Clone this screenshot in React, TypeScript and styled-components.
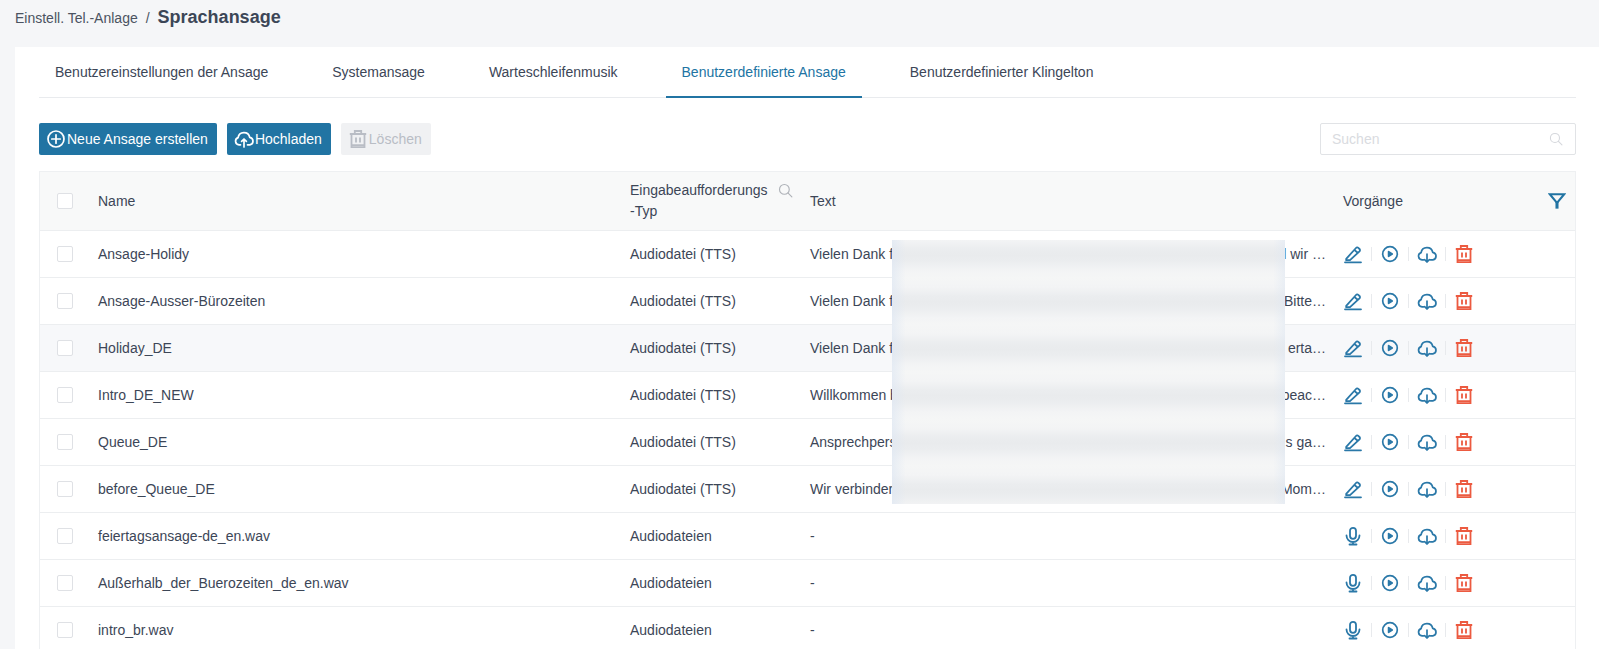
import React from 'react';
import styled, { createGlobalStyle } from 'styled-components';

const Global = createGlobalStyle`
  html, body { margin: 0; padding: 0; background: #f5f6f8; overflow: hidden; height: 649px; }
  body { font-family: "Liberation Sans", Arial, sans-serif; color: #3c4657; font-size: 14px; }
  * { box-sizing: border-box; }
`;

const Page = styled.div`
  width: 1599px;
  height: 649px;
  overflow: hidden;
  padding: 0 0 0 15px;
  display: flex;
  flex-direction: column;
`;
const Crumbs = styled.div`
  flex: 0 0 47px;
  display: flex;
  align-items: flex-start;
  padding-top: 7px;
  line-height: 20px;
`;
const CrumbLink = styled.span`
  color: #4b5361;
  padding-top: 1px;
`;
const CrumbSep = styled.span`
  margin: 1px 8px 0 8px;
  color: #4b5361;
`;
const CrumbNow = styled.span`
  font-size: 18px;
  font-weight: 700;
  color: #3c4657;
`;
const Card = styled.main`
  flex: 1;
  min-height: 0;
  background: #fff;
  padding: 0 23px 0 24px;
  position: relative;
`;
const Tabs = styled.nav`
  height: 51px;
  display: flex;
  border-bottom: 1px solid #e9ebee;
`;
const Tab = styled.div<{ $active?: boolean }>`
  padding: 0 16px;
  margin-right: 32px;
  line-height: 50px;
  height: 51px;
  white-space: nowrap;
  color: ${p => (p.$active ? '#2174a3' : '#3c4657')};
  border-bottom: ${p => (p.$active ? '2px solid #2174a3' : 'none')};
`;
const Toolbar = styled.div`
  display: flex;
  align-items: center;
  gap: 10px;
  margin-top: 25px;
  height: 32px;
`;
const Btn = styled.button<{ $disabled?: boolean }>`
  height: 32px;
  border: 0;
  border-radius: 2px;
  padding: 0 9px 0 7px;
  display: inline-flex;
  align-items: center;
  gap: 1px;
  font: 14px "Liberation Sans", Arial, sans-serif;
  background: ${p => (p.$disabled ? '#f0f1f3' : '#2174a3')};
  color: ${p => (p.$disabled ? '#b9bdc5' : '#fff')};
`;
const Search = styled.div`
  margin-left: auto;
  width: 256px;
  height: 32px;
  border: 1px solid #e1e3e6;
  border-radius: 2px;
  padding: 0 12px 0 11px;
  display: flex;
  align-items: center;
  justify-content: space-between;
  color: #d9dbe0;
`;
const Table = styled.div`
  margin-top: 16px;
  border: 1px solid #eef0f2;
  border-bottom: 0;
`;
const cols = '58px 532px 180px 533px 1fr';
const Head = styled.div`
  display: grid;
  grid-template-columns: ${cols};
  height: 59px;
  align-items: center;
  background: #f8f9f9;
  border-bottom: 1px solid #eceef0;
  line-height: 21px;
`;
const Row = styled.div<{ $hover?: boolean }>`
  display: grid;
  grid-template-columns: ${cols};
  height: 47px;
  align-items: center;
  background: ${p => (p.$hover ? '#f7f8fa' : '#fff')};
  border-bottom: 1px solid #eceef0;
`;
const CheckCell = styled.div`
  padding-left: 17px;
  display: flex;
`;
const Check = styled.span`
  width: 16px;
  height: 16px;
  background: #fff;
  border: 1px solid #dfe1e5;
  border-radius: 2px;
`;
const Cell = styled.div`
  white-space: nowrap;
`;
const TypeHead = styled.div`
  display: flex;
  align-items: flex-start;
  justify-content: space-between;
  padding-right: 17px;
`;
const TypeIcon = styled.span`
  display: flex;
  margin-top: 3px;
`;
const TextCell = styled.div`
  display: flex;
  justify-content: space-between;
  padding-right: 17px;
  white-space: nowrap;
`;
const OpsHead = styled.div`
  display: flex;
  justify-content: space-between;
  padding-right: 9px;
  align-items: center;
`;
const Ops = styled.div`
  display: flex;
  align-items: center;
`;
const Op = styled.span`
  flex: none;
  padding-right: 9px;
  margin-right: 8px;
  display: flex;
  position: relative;
  &:not(:last-child)::after {
    content: '';
    position: absolute;
    right: 0;
    top: 3px;
    height: 14px;
    width: 1px;
    background: #e8eaed;
  }
`;
const Blur = styled.div`
  position: absolute;
  left: 877px;
  top: 193px;
  width: 393px;
  height: 264px;
  background:
    linear-gradient(90deg, rgba(222,231,243,.65), rgba(255,255,255,0) 3.5%, rgba(255,255,255,0) 97%, rgba(222,231,243,.5)),
    repeating-linear-gradient(180deg, #f3f4f5 0, #ebedef 9px, #e9ebed 15px, #ebedef 21px, #f3f4f5 31px, #f5f6f6 38px, #f3f4f5 47px);
`;

const blue = '#2a78a8';
const red = '#ec5a40';
const Ico: React.FC<{ c?: string; s?: number; sw?: number; children: React.ReactNode }> = ({ c = blue, s = 20, sw = 1.7, children }) => (
  <svg width={s} height={s} viewBox="0 0 20 20" fill="none" stroke={c} strokeWidth={sw} strokeLinecap="round" strokeLinejoin="round">{children}</svg>
);
const cloud = 'M6.5 15.8H5a3.7 3.7 0 0 1-.9-7.2 5.9 5.9 0 0 1 11.6-.3 3.8 3.8 0 0 1 .2 7.5h-2.4';
const Pen = () => <Ico sw={1.8}><path d="M3.2 14.8 13 4a1.6 1.6 0 0 1 2.3-.1l1.2 1.1a1.6 1.6 0 0 1 0 2.3L7 16.2H3.2zM11.4 5.8l3.5 3.2M2 18.3h16" /></Ico>;
const Play = () => <Ico><circle cx="10" cy="10" r="7.3" /><path d="M8.6 7.6 12.2 10l-3.6 2.4z" fill={blue} /></Ico>;
const CloudDown = () => <Ico><path d={cloud} /><path d="M10 10v8M7.6 15.6 10 18l2.4-2.4" /></Ico>;
const Trash = ({ c = red }: { c?: string }) => <Ico c={c} sw={1.8}><path d="M1.8 5h16.4M6.8 5V2h6.4v3M3.5 5v13.2h13V5M3.5 16.2h13M8 8.5v5M12 8.5v5" strokeLinecap="butt" strokeLinejoin="miter" /></Ico>;
const Mic = () => <Ico sw={1.8}><rect x="7" y="1.8" width="6" height="11" rx="3" /><path d="M3.5 9.5a6.5 6.5 0 0 0 13 0M10 16v2.5M6.5 18.5h7" /></Ico>;
const Plus = () => <Ico c="#fff"><circle cx="10" cy="10" r="8" /><path d="M10 5.8v8.4M5.8 10h8.4" /></Ico>;
const CloudUp = () => <Ico c="#fff"><path d={cloud} /><path d="M10 18v-8M7.6 12.4 10 10l2.4 2.4" /></Ico>;
const Mag = ({ c = '#d5d7dc', s = 14 }: { c?: string; s?: number }) => <Ico c={c} s={s} sw={1.5}><circle cx="8.5" cy="8.5" r="6.5" /><path d="m13.5 13.5 5 5" /></Ico>;
const Funnel = () => (
  <Ico c="#2174a3" s={18} sw={2.3}>
    <path d="M2 2.5h16l-8 9.5z" strokeLinejoin="miter" />
    <path d="M10 11v7.5" strokeWidth={3.4} strokeLinecap="butt" />
  </Ico>
);

const rows: { n: string; t: string; a?: string; b?: string; hover?: boolean }[] = [
  { n: 'Ansage-Holidy', t: 'Audiodatei (TTS)', a: 'Vielen Dank f', b: 'l wir …' },
  { n: 'Ansage-Ausser-Bürozeiten', t: 'Audiodatei (TTS)', a: 'Vielen Dank f', b: 'Bitte…' },
  { n: 'Holiday_DE', t: 'Audiodatei (TTS)', a: 'Vielen Dank f', b: 'erta…', hover: true },
  { n: 'Intro_DE_NEW', t: 'Audiodatei (TTS)', a: 'Willkommen b', b: 'peac…' },
  { n: 'Queue_DE', t: 'Audiodatei (TTS)', a: 'Ansprechpers', b: 's ga…' },
  { n: 'before_Queue_DE', t: 'Audiodatei (TTS)', a: 'Wir verbinder', b: 'Mom…' },
  { n: 'feiertagsansage-de_en.wav', t: 'Audiodateien' },
  { n: 'Außerhalb_der_Buerozeiten_de_en.wav', t: 'Audiodateien' },
  { n: 'intro_br.wav', t: 'Audiodateien' },
];

export default function App() {
  return (
    <Page>
      <Global />
      <Crumbs>
        <CrumbLink>Einstell. Tel.-Anlage</CrumbLink>
        <CrumbSep>/</CrumbSep>
        <CrumbNow>Sprachansage</CrumbNow>
      </Crumbs>
      <Card>
        <Tabs>
          <Tab>Benutzereinstellungen der Ansage</Tab>
          <Tab>Systemansage</Tab>
          <Tab>Warteschleifenmusik</Tab>
          <Tab $active>Benutzerdefinierte Ansage</Tab>
          <Tab>Benutzerdefinierter Klingelton</Tab>
        </Tabs>
        <Toolbar>
          <Btn><Plus />Neue Ansage erstellen</Btn>
          <Btn><CloudUp />Hochladen</Btn>
          <Btn $disabled><Trash c="#b9bdc5" />Löschen</Btn>
          <Search>Suchen<Mag /></Search>
        </Toolbar>
        <Table>
          <Head>
            <CheckCell><Check /></CheckCell>
            <Cell>Name</Cell>
            <TypeHead><span>Eingabeaufforderungs<br />-Typ</span><TypeIcon><Mag c="#aeb2b8" s={15} /></TypeIcon></TypeHead>
            <Cell>Text</Cell>
            <OpsHead>Vorgänge<Funnel /></OpsHead>
          </Head>
          {rows.map(r => (
            <Row key={r.n} $hover={r.hover}>
              <CheckCell><Check /></CheckCell>
              <Cell>{r.n}</Cell>
              <Cell>{r.t}</Cell>
              <TextCell>{r.a ? <><span>{r.a}</span><span>{r.b}</span></> : '-'}</TextCell>
              <Ops>
                <Op>{r.a ? <Pen /> : <Mic />}</Op>
                <Op><Play /></Op>
                <Op><CloudDown /></Op>
                <Op><Trash /></Op>
              </Ops>
            </Row>
          ))}
        </Table>
        <Blur />
      </Card>
    </Page>
  );
}
